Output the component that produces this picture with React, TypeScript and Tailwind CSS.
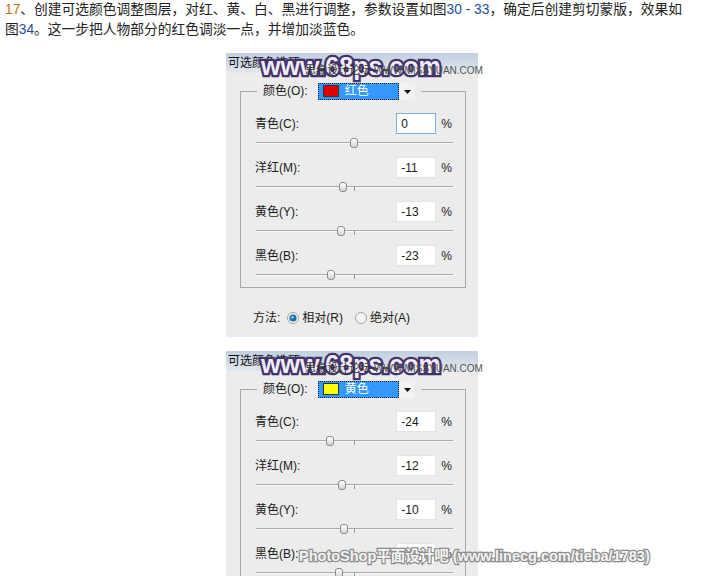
import React from 'react'

type Row = { label: string; value: number; focused?: boolean }

const panels: { swatch: string; name: string; rows: Row[] }[] = [
  {
    swatch: 'bg-[#e00000]',
    name: '红色',
    rows: [
      { label: '青色(C):', value: 0, focused: true },
      { label: '洋红(M):', value: -11 },
      { label: '黄色(Y):', value: -13 },
      { label: '黑色(B):', value: -23 },
    ],
  },
  {
    swatch: 'bg-[#ffff00]',
    name: '黄色',
    rows: [
      { label: '青色(C):', value: -24 },
      { label: '洋红(M):', value: -12 },
      { label: '黄色(Y):', value: -10 },
      { label: '黑色(B):', value: -15 },
    ],
  },
]

function Slider({ value }: { value: number }) {
  return (
    <div className="relative ml-[1px] h-[21px] w-[197px]">
      <div className="absolute left-0 right-0 top-[8px] h-px bg-[#a9a9a9]" />
      <div className="absolute left-0 right-0 top-[9px] h-px bg-[#f8f8f8]" />
      <div className="absolute left-[98px] top-[8px] h-[5px] w-px bg-[#9a9a9a]" />
      <div
        className="absolute top-[4px] h-[10px] w-[8px] rounded-[3px] border border-[#8c8c8c] bg-gradient-to-b from-white to-[#d4d4d4]"
        style={{ left: 98 + value - 4 }}
      />
    </div>
  )
}

function Radio({ checked }: { checked?: boolean }) {
  return (
    <svg width="12" height="12" viewBox="0 0 12 12">
      <circle cx="6" cy="6" r="5.5" fill="#f4f4f4" stroke="#9aa4ae" />
      {checked && <circle cx="6" cy="6" r="3.6" fill="#1d6fa8" />}
      {checked && <circle cx="5.4" cy="5.2" r="1.3" fill="#8fd0f0" />}
    </svg>
  )
}

function Panel({ swatch, name, rows }: { swatch: string; name: string; rows: Row[] }) {
  return (
    <div className="ml-[226px] flex h-[284px] w-[252px] flex-col bg-[#ececec] text-[12px] text-[#1a1a1a]">
      <div className="h-[20px] bg-gradient-to-b from-[#c1cfe0] to-[#e2e8ee] pl-[2px] leading-[20px] text-[#111]">
        可选颜色选项
      </div>
      <div className="ml-[14px] mt-[18px] w-[226px] border border-[#a8a8a8]">
        <div className="-mt-[10px] ml-[16px] flex h-[18px] w-max items-center gap-[10px] bg-[#ececec] px-[6px]">
          <span>颜色(O):</span>
          <div className="flex h-[17px] w-[97px] items-center bg-[#f2f2f2]">
            <div className="flex h-full w-[81px] items-center border border-dotted border-[#222] bg-[#3399ff] pl-[4px]">
              <div className={`h-[12px] w-[16px] border border-[#333] ${swatch}`} />
              <span className="ml-[6px] text-white">{name}</span>
            </div>
            <svg width="16" height="17" viewBox="0 0 16 17">
              <path d="M5 7h7l-3.5 4z" fill="#111" />
            </svg>
          </div>
        </div>
        <div className="mt-[13px] flex flex-col gap-[2px] pl-[14px]">
          {rows.map((r) => (
            <div key={r.label}>
              <div className="flex h-[21px] items-center pr-[13px]">
                <span className="flex-1">{r.label}</span>
                <div
                  className={`flex h-[21px] w-[40px] items-center bg-white pl-[4px] ${
                    r.focused ? 'border border-[#7fb0e4]' : 'border border-[#e4e4e4]'
                  }`}
                >
                  {r.value}
                </div>
                <span className="ml-[5px]">%</span>
              </div>
              <Slider value={r.value} />
            </div>
          ))}
        </div>
      </div>
      <div className="ml-[27px] mt-[20px] flex h-[20px] items-center">
        <span>方法:</span>
        <span className="ml-[7px]">
          <Radio checked />
        </span>
        <span className="ml-[3px]">相对(R)</span>
        <span className="ml-[12px]">
          <Radio />
        </span>
        <span className="ml-[3px]">绝对(A)</span>
      </div>
    </div>
  )
}

function SiteMark({ top }: { top: number }) {
  return (
    <>
      <div
        className="absolute left-[261px] whitespace-nowrap font-['Liberation_Sans',sans-serif] text-[25px] font-bold leading-[25px] text-[#f0edf5] [-webkit-text-stroke:4.5px_#43336a] [paint-order:stroke_fill]"
        style={{ top }}
      >
        www.68ps.com
      </div>
      <div
        className="absolute left-[305px] whitespace-nowrap text-[11px] leading-[12px] text-[#333]"
        style={{ top: top + 10 }}
      >
        思缘设计论坛 <span className="text-[10px] text-[#555]">WWW.MISSYUAN.COM</span>
      </div>
    </>
  )
}

export default function App() {
  return (
    <div className="relative h-[576px] w-[708px] overflow-hidden bg-white font-['Liberation_Sans','Noto_Sans_CJK_SC',sans-serif]">
      <p className="whitespace-nowrap pl-[5px] text-[13.75px] leading-[20px] text-[#222]">
        <span className="text-[#b07414]">17</span>、创建可选颜色调整图层，对红、黄、白、黑进行调整，参数设置如图
        <span className="text-[#1d4f9c]">30 - 33</span>，确定后创建剪切蒙版，效果如
        <br />图<span className="text-[#1d4f9c]">34</span>。这一步把人物部分的红色调淡一点，并增加淡蓝色。
      </p>
      <div className="mt-[13px] flex flex-col gap-[14px]">
        {panels.map((p) => (
          <Panel key={p.name} {...p} />
        ))}
      </div>
      <SiteMark top={54} />
      <SiteMark top={352} />
      <div className="absolute left-[299px] top-[547px] whitespace-nowrap text-[14.5px] font-bold leading-[18px] text-[#f4f4f4] [-webkit-text-stroke:2.5px_#8e8e8e] [paint-order:stroke_fill]">
        PhotoShop平面设计吧 (www.linecg.com/tieba/1783)
      </div>
    </div>
  )
}
